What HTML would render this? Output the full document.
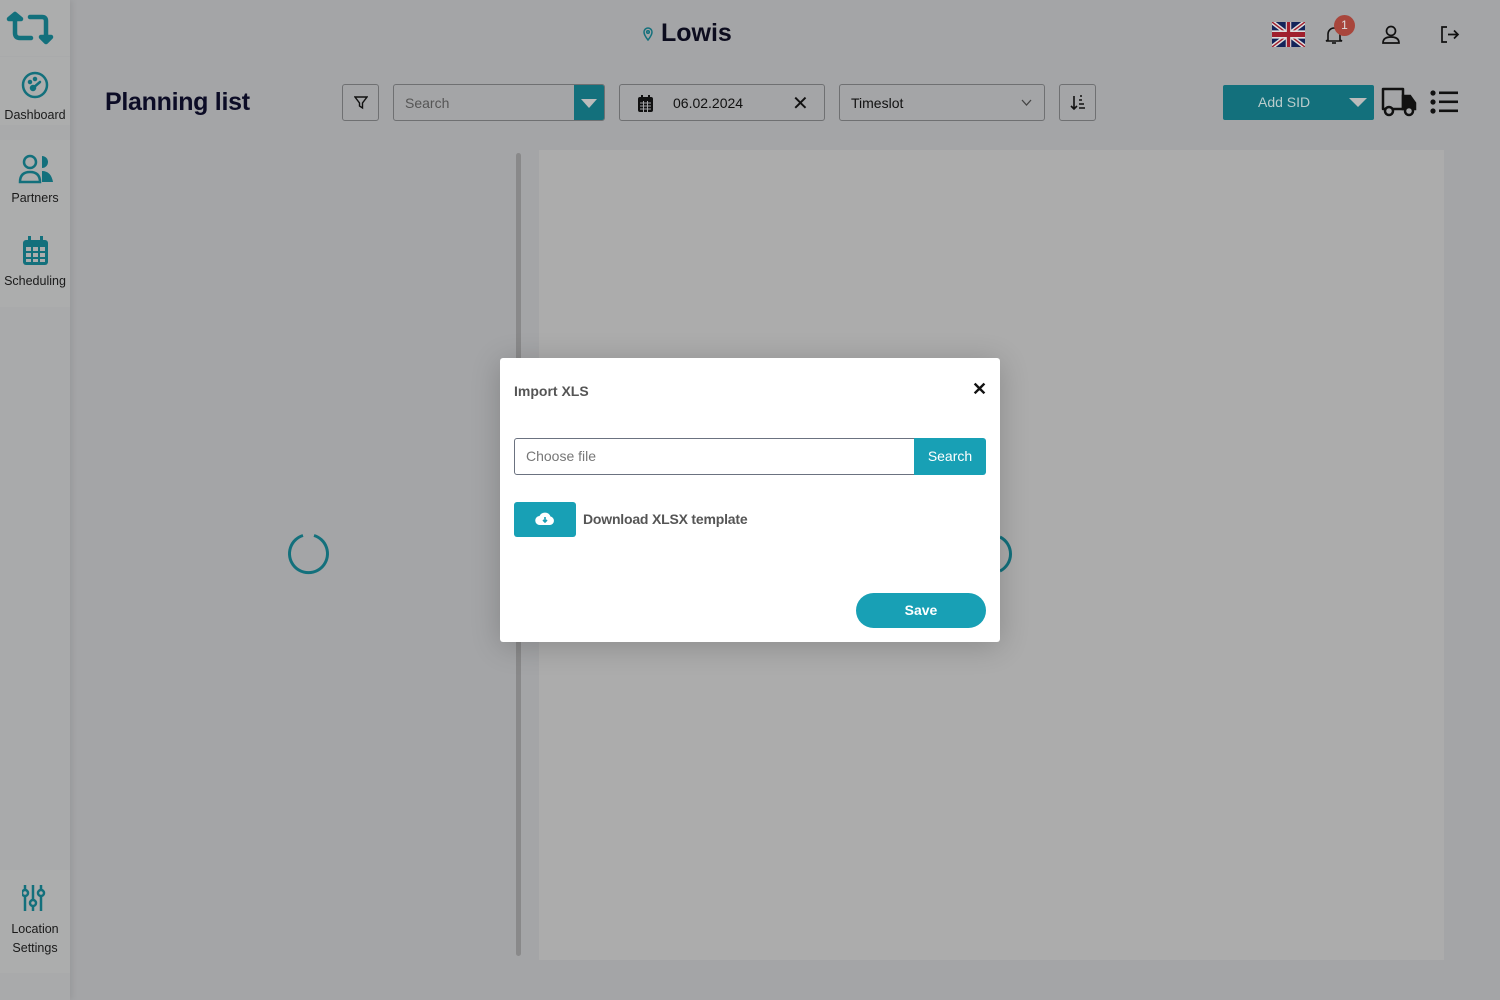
<!DOCTYPE html><html><head><meta charset="utf-8"><style>
*{box-sizing:border-box;margin:0;padding:0}
body{width:1500px;height:1000px;overflow:hidden;background:#a4a5a7;font-family:"Liberation Sans",sans-serif;position:relative}
.a{position:absolute}
.side{left:0;top:0;width:70px;height:1000px;background:#a9aaab;box-shadow:2px 0 6px rgba(0,0,0,.08)}
.item{position:absolute;left:0;width:70px;background:#acadad;text-align:center;font-size:12.5px;color:#1a1a1a}
.box{border:1px solid #6f7072;border-radius:3px}
</style></head><body>
<div class="a side">
<div class="item" style="top:0;height:56px"><svg class="a" style="left:0;top:0" width="70" height="56" viewBox="0 0 70 56" fill="none" stroke="#13707c" stroke-width="4.5" stroke-linejoin="round" stroke-linecap="round"><path d="M15 19V33Q15 38 20 38H31"/><path d="M9 19L15 14 21 19Z" fill="#13707c"/><path d="M30 17H42Q46 17 46 21V36"/><path d="M41 37L46 42 51 37Z" fill="#13707c"/></svg></div>
<div class="item" style="top:57px;height:68px"><svg class="a" style="left:21px;top:14px" width="28" height="28" viewBox="0 0 28 28" fill="none" stroke="#13707c" stroke-width="2.5"><circle cx="14" cy="14" r="12"/><path d="M12 17L19 11" stroke-linecap="round"/><circle cx="12" cy="17" r="2" fill="#13707c"/><circle cx="9" cy="11" r="1" fill="#13707c"/><circle cx="14" cy="8" r="1" fill="#13707c"/></svg><div class="a" style="top:51px;width:70px">Dashboard</div></div>
<div class="item" style="top:140px;height:83px"><svg class="a" style="left:18px;top:14px" width="36" height="30" viewBox="0 0 36 30"><circle cx="12" cy="8" r="6" fill="none" stroke="#13707c" stroke-width="2.5"/><path d="M24 2a6 6 0 0 1 0 12z" fill="#13707c"/><path d="M2 28Q2 18 12 18Q22 18 22 28Z" fill="none" stroke="#13707c" stroke-width="2.5"/><path d="M24 17Q33 17 35 28H24Z" fill="#13707c"/></svg><div class="a" style="top:51px;width:70px">Partners</div></div>
<div class="item" style="top:223px;height:84px"><svg class="a" style="left:23px;top:13px" width="25" height="29" viewBox="0 0 25 29"><rect x="0" y="4" width="25" height="25" rx="3" fill="#13707c"/><rect x="5" y="0" width="3" height="7" fill="#13707c"/><rect x="17" y="0" width="3" height="7" fill="#13707c"/><g fill="#acadad"><rect x="3" y="11" width="5" height="4"/><rect x="10" y="11" width="5" height="4"/><rect x="17" y="11" width="5" height="4"/><rect x="3" y="17" width="5" height="4"/><rect x="10" y="17" width="5" height="4"/><rect x="17" y="17" width="5" height="4"/><rect x="3" y="23" width="5" height="3"/><rect x="10" y="23" width="5" height="3"/><rect x="17" y="23" width="5" height="3"/></g></svg><div class="a" style="top:51px;width:70px">Scheduling</div></div>
<div class="item" style="top:870px;height:103px"><svg class="a" style="left:22px;top:13px" width="30" height="30" viewBox="0 0 30 30" fill="none" stroke="#13707c" stroke-width="2.5"><path d="M3 2V28M11 2V28M19 2V28"/><circle cx="3" cy="10" r="3" fill="#acadad"/><circle cx="11" cy="20" r="3" fill="#acadad"/><circle cx="19" cy="10" r="3" fill="#acadad"/></svg><div class="a" style="top:50px;width:70px;line-height:19px">Location<br>Settings</div></div>
</div>
<svg class="a" style="left:643px;top:27px" width="10" height="14" viewBox="0 0 10 14" fill="none" stroke="#13707c" stroke-width="1.5"><path d="M5 13Q1 8 1 5a4 4 0 0 1 8 0Q9 8 5 13Z"/><circle cx="5" cy="5" r="1.3"/></svg>
<div class="a" style="left:661px;top:19px;font-size:25px;font-weight:bold;color:#0c0c1e">Lowis</div>
<svg class="a" style="left:1272px;top:22px" width="33" height="25" viewBox="0 0 60 30" preserveAspectRatio="none"><rect width="60" height="30" fill="#14245a"/><path d="M0 0L60 30M60 0L0 30" stroke="#ddd" stroke-width="6"/><path d="M0 0L60 30M60 0L0 30" stroke="#a0202e" stroke-width="2"/><path d="M30 0V30M0 15H60" stroke="#ddd" stroke-width="10"/><path d="M30 0V30M0 15H60" stroke="#a0202e" stroke-width="6"/></svg>
<svg class="a" style="left:1325px;top:26px" width="18" height="19" viewBox="0 0 18 19" fill="none" stroke="#111" stroke-width="1.6"><path d="M3 14V8a6 6 0 0 1 12 0v6l2 1H1z"/><path d="M7 17h4"/></svg>
<div class="a" style="left:1334px;top:15px;width:21px;height:21px;border-radius:50%;background:#a8463c;color:#ddd;font-size:12px;text-align:center;line-height:21px">1</div>
<svg class="a" style="left:1382px;top:25px" width="18" height="19" viewBox="0 0 18 19" fill="none" stroke="#111" stroke-width="1.7"><circle cx="9" cy="6" r="4.5"/><path d="M1 18Q1 12 9 12Q17 12 17 18Z"/></svg>
<svg class="a" style="left:1440px;top:26px" width="20" height="17" viewBox="0 0 20 17" fill="none" stroke="#111" stroke-width="1.7"><path d="M7 1H2V16H7M8 8.5H18M14 4.5L18 8.5 14 12.5"/></svg>
<div class="a" style="left:105px;top:88px;font-size:25px;font-weight:bold;color:#0c0c26;letter-spacing:-0.3px">Planning list</div>
<div class="a box" style="left:342px;top:84px;width:37px;height:37px"><svg class="a" style="left:11px;top:11px" width="14" height="14" viewBox="0 0 14 14" fill="none" stroke="#111" stroke-width="1.4"><path d="M1 1H13L8.5 7V12L5.5 10V7Z"/></svg></div>
<div class="a box" style="left:393px;top:84px;width:212px;height:37px;overflow:hidden"><span class="a" style="left:11px;top:10px;font-size:14px;color:#555">Search</span><div class="a" style="right:0;top:0;width:30px;height:37px;background:#13707c"><div class="a" style="left:7px;top:14px;border-left:8px solid transparent;border-right:8px solid transparent;border-top:9px solid #bbb"></div></div></div>
<div class="a box" style="left:619px;top:84px;width:206px;height:37px"><svg class="a" style="left:18px;top:10px" width="15" height="17" viewBox="0 0 15 17"><rect y="2" width="15" height="15" rx="2" fill="#111"/><rect x="3" width="2" height="4" fill="#111"/><rect x="10" width="2" height="4" fill="#111"/><path d="M2 8H13M2 11H13M2 14H13M5.5 6V17M9.5 6V17" stroke="#a4a5a7" stroke-width="1"/></svg><span class="a" style="left:53px;top:10px;font-size:14px;color:#111">06.02.2024</span><span class="a" style="left:172px;top:6px;font-size:20px;color:#111">✕</span></div>
<div class="a box" style="left:839px;top:84px;width:206px;height:37px"><span class="a" style="left:11px;top:10px;font-size:14px;color:#111">Timeslot</span><svg class="a" style="left:181px;top:14px" width="11" height="8" viewBox="0 0 11 8" fill="none" stroke="#444" stroke-width="1.3"><path d="M1 1L5.5 6 10 1"/></svg></div>
<div class="a box" style="left:1059px;top:84px;width:37px;height:37px"><svg class="a" style="left:10px;top:10px" width="16" height="16" viewBox="0 0 16 16" fill="none" stroke="#111" stroke-width="1.6"><path d="M4 1V14M1 11L4 14 7 11M9 5H12M9 9H14M9 13H15M10 1H12"/></svg></div>
<div class="a" style="left:1223px;top:85px;width:151px;height:35px;background:#13707c;border-radius:2px"><span class="a" style="left:35px;top:9px;font-size:14px;color:#bcc">Add SID</span><div class="a" style="left:126px;top:13px;border-left:9px solid transparent;border-right:9px solid transparent;border-top:9px solid #bbb"></div></div>
<svg class="a" style="left:1381px;top:86px" width="36" height="31" viewBox="0 0 36 31" fill="none" stroke="#111" stroke-width="2.5"><path d="M2 3H22V23H2Z" stroke-linejoin="round"/><path d="M22 10H29L34 17V23H22Z" fill="#111"/><circle cx="8" cy="25" r="4" fill="#a4a5a7"/><circle cx="28" cy="25" r="4" fill="#a4a5a7"/></svg>
<svg class="a" style="left:1430px;top:90px" width="28" height="24" viewBox="0 0 28 24" fill="#111"><circle cx="3" cy="3" r="2.6"/><circle cx="3" cy="12" r="2.6"/><circle cx="3" cy="21" r="2.6"/><rect x="9" y="1.5" width="19" height="2.6"/><rect x="9" y="10.5" width="19" height="2.6"/><rect x="9" y="19.5" width="19" height="2.6"/></svg>
<div class="a" style="left:516px;top:153px;width:5px;height:803px;background:#89898a;border-radius:3px"></div>
<div class="a" style="left:539px;top:150px;width:905px;height:810px;background:#acacac"></div>
<svg class="a" style="left:287px;top:532px" width="44" height="44" viewBox="0 0 44 44" fill="none" stroke="#13707c" stroke-width="3"><path d="M16 3.5A19 19 0 1 0 27 3.5"/></svg>
<svg class="a" style="left:990px;top:532px" width="24" height="44" viewBox="0 0 24 44" fill="none" stroke="#13707c" stroke-width="3"><path d="M10 5A19 19 0 0 1 10 39"/></svg>
<div class="a" style="left:500px;top:358px;width:500px;height:284px;background:#fff;border-radius:3px;box-shadow:0 4px 30px rgba(0,0,0,.2)">
<div class="a" style="left:14px;top:25px;font-size:14px;font-weight:bold;color:#555">Import XLS</div>
<div class="a" style="left:472px;top:21px;font-size:18px;color:#111;font-weight:bold">✕</div>
<div class="a" style="left:14px;top:80px;width:401px;height:37px;border:1px solid #6b7280;border-radius:3px 0 0 3px"><span class="a" style="left:11px;top:9px;font-size:14px;color:#777">Choose file</span></div>
<div class="a" style="left:414px;top:80px;width:72px;height:37px;background:#18a0b5;border-radius:0 3px 3px 0;color:#fff;font-size:14px;text-align:center;line-height:37px">Search</div>
<div class="a" style="left:14px;top:144px;width:62px;height:35px;background:#18a0b5;border-radius:3px"><svg class="a" style="left:21px;top:9px" width="20" height="15" viewBox="0 0 20 15"><path d="M5 14A4.5 4.5 0 0 1 4.5 5 6 6 0 0 1 15.5 5.5 4.3 4.3 0 0 1 15 14Z" fill="#fff"/><path d="M10 6V11M8 9L10 11 12 9" stroke="#18a0b5" stroke-width="1.6" fill="none"/></svg></div>
<div class="a" style="left:83px;top:153px;font-size:14px;font-weight:bold;color:#555;letter-spacing:-0.2px">Download XLSX template</div>
<div class="a" style="left:356px;top:235px;width:130px;height:35px;background:#18a0b5;border-radius:18px;color:#fff;font-size:14px;font-weight:bold;text-align:center;line-height:35px">Save</div>
</div>
</body></html>
